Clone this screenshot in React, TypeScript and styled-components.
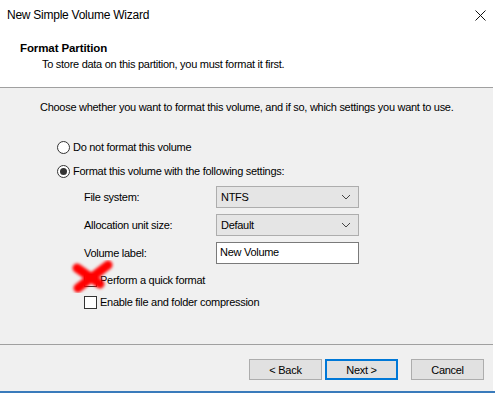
import styled, { createGlobalStyle } from 'styled-components';

const GlobalStyle = createGlobalStyle`
  html, body {
    margin: 0;
    padding: 0;
    background: #ffffff;
  }
  body {
    font-family: "Liberation Sans", Arial, sans-serif;
    font-size: 11px;
    letter-spacing: -0.28px;
    color: #000;
  }
`

const Window = styled.div`
  width: 495px;
  height: 393px;
  box-sizing: border-box;
  display: flex;
  flex-direction: column;
  border-bottom: 2px solid #3a7bbb;
  background: #fff;
  white-space: nowrap;
`
const TitleBar = styled.div`
  height: 30px;
  display: flex;
  align-items: center;
  justify-content: space-between;
  padding: 0 9px 0 7px;
  font-size: 12px;
  letter-spacing: -0.25px;
`
const Header = styled.div`
  height: 58px;
  margin-right: 2px;
  padding: 11px 0 0 20px;
  box-sizing: border-box;
  border-bottom: 1px solid #a0a0a0;
  line-height: 15px;
`
const HeaderTitle = styled.div`
  font-weight: bold;
  font-size: 11.5px;
  letter-spacing: -0.1px;
`
const HeaderSub = styled.div`
  margin-left: 22px;
  margin-top: 1px;
`
const Body = styled.div`
  flex: 1;
  margin-right: 2px;
  background: #f0f0f0;
  padding: 12px 0 0 40px;
  position: relative;
  line-height: 15px;
`
const Intro = styled.div`
  margin-bottom: 20px;
`
const OptionRow = styled.label<{ $indent?: number }>`
  display: flex;
  align-items: center;
  height: 24px;
  gap: 3px;
  padding-left: ${p => p.$indent ?? 17}px;
`
const Radio = styled.span<{ $checked?: boolean }>`
  width: 13px;
  height: 13px;
  box-sizing: border-box;
  border: 1px solid #333;
  border-radius: 50%;
  background: #fff;
  display: flex;
  align-items: center;
  justify-content: center;
  &::after {
    content: '';
    display: ${p => (p.$checked ? 'block' : 'none')};
    width: 7px;
    height: 7px;
    border-radius: 50%;
    background: #333;
  }
`
const Fields = styled.div`
  display: flex;
  flex-direction: column;
  gap: 6px;
  margin-top: 3px;
  padding-left: 44px;
`
const FieldRow = styled.div`
  display: grid;
  grid-template-columns: 132px 143px;
  align-items: center;
  height: 22px;
`
const Select = styled.div`
  height: 22px;
  box-sizing: border-box;
  border: 1px solid #adadad;
  background: #e5e5e5;
  display: flex;
  align-items: center;
  justify-content: space-between;
  padding: 0 7px 0 4px;
`
const TextBox = styled.div`
  height: 22px;
  box-sizing: border-box;
  border: 1px solid #7a7a7a;
  background: #fff;
  display: flex;
  align-items: center;
  padding: 0 3px 2px;
`
const Checks = styled.div`
  margin-top: 5px;
`
const CheckRow = styled.label`
  display: flex;
  align-items: center;
  height: 22px;
  gap: 3px;
  padding-left: 44px;
`
const Checkbox = styled.span`
  width: 13px;
  height: 13px;
  box-sizing: border-box;
  border: 1px solid #333;
  background: #fff;
`
const Scribble = styled.svg`
  position: absolute;
  left: 66px;
  top: 172px;
  pointer-events: none;
`
const Footer = styled.div`
  height: 47px;
  margin-right: 2px;
  box-sizing: border-box;
  border-top: 1px solid #a0a0a0;
  background: #f0f0f0;
  display: flex;
  justify-content: flex-end;
  align-items: flex-start;
  padding: 14px 9px 0 0;
`
const Button = styled.div<{ $primary?: boolean; $gap?: number }>`
  width: 73px;
  height: 21px;
  box-sizing: border-box;
  margin-left: ${p => p.$gap ?? 0}px;
  border: ${p => (p.$primary ? '2px solid #0078d7' : '1px solid #adadad')};
  background: #e1e1e1;
  display: flex;
  align-items: center;
  justify-content: center;
`

const Chevron = () => (
  <svg width="10" height="6" viewBox="0 0 10 6">
    <path d="M1 1 L5 5 L9 1" fill="none" stroke="#444" strokeWidth="1" />
  </svg>
)

const App = () => {
  return (
    <>
      <GlobalStyle />
      <Window>
        <TitleBar>
          <span>New Simple Volume Wizard</span>
          <svg width="11" height="11" viewBox="0 0 11 11">
            <path d="M0.5 0.5 L10.5 10.5 M10.5 0.5 L0.5 10.5" stroke="#111" strokeWidth="1" />
          </svg>
        </TitleBar>
        <Header>
          <HeaderTitle>Format Partition</HeaderTitle>
          <HeaderSub>To store data on this partition, you must format it first.</HeaderSub>
        </Header>
        <Body>
          <Intro>Choose whether you want to format this volume, and if so, which settings you want to use.</Intro>
          <OptionRow><Radio />Do not format this volume</OptionRow>
          <OptionRow><Radio $checked />Format this volume with the following settings:</OptionRow>
          <Fields>
            <FieldRow><span>File system:</span><Select><span>NTFS</span><Chevron /></Select></FieldRow>
            <FieldRow><span>Allocation unit size:</span><Select><span>Default</span><Chevron /></Select></FieldRow>
            <FieldRow><span>Volume label:</span><TextBox>New Volume</TextBox></FieldRow>
          </Fields>
          <Checks>
            <CheckRow><Checkbox />Perform a quick format</CheckRow>
            <CheckRow><Checkbox />Enable file and folder compression</CheckRow>
          </Checks>
          <Scribble width="54" height="40" viewBox="0 0 54 40">
            <defs>
              <filter id="soft" x="-20%" y="-20%" width="140%" height="140%">
                <feGaussianBlur stdDeviation="1.6" />
              </filter>
            </defs>
            <g filter="url(#soft)" stroke="#ff0000" strokeWidth="9" strokeLinecap="round">
              <path d="M11 8 L34 24" />
              <path d="M42 5 L12 28" />
            </g>
          </Scribble>
        </Body>
        <Footer>
          <Button>&lt; Back</Button>
          <Button $primary $gap={3}>Next &gt;</Button>
          <Button $gap={13}>Cancel</Button>
        </Footer>
      </Window>
    </>
  )
}
export default App;
